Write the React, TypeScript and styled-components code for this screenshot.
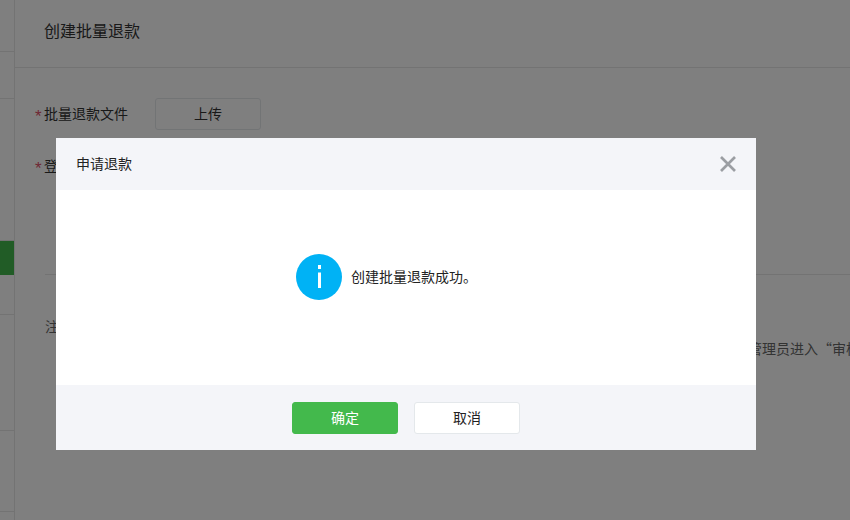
import React from "react";
import styled, { createGlobalStyle } from "styled-components";

const GlobalStyle = createGlobalStyle`
  html, body {
    margin: 0;
    padding: 0;
    background: #fff;
  }
  body {
    font-family: "Noto Sans CJK SC", "Liberation Sans", sans-serif;
    font-size: 14px;
    color: #333;
  }
`;

const Page = styled.div`
  position: relative;
  display: flex;
  width: 850px;
  height: 520px;
  overflow: hidden;
`;

const Sidebar = styled.div`
  flex: none;
  width: 14px;
  border-right: 1px solid #e7e7e7;
`;

const SideRow = styled.div<{ $h: number; $active?: boolean }>`
  box-sizing: border-box;
  height: ${({ $h }) => $h}px;
  border-bottom: ${({ $active }) => ($active ? "none" : "1px solid #e7e7e7")};
  background: ${({ $active }) => ($active ? "#43b94c" : "transparent")};
`;

const Main = styled.div`
  flex: 1;
  min-width: 0;
`;

const Header = styled.div`
  box-sizing: border-box;
  display: flex;
  align-items: center;
  height: 68px;
  padding: 0 0 8px 29px;
  border-bottom: 1px solid #e7e7e7;
  font-size: 16px;
`;

const Form = styled.div`
  padding: 30px 0 0 20px;
`;

const FormRow = styled.div`
  display: flex;
  align-items: center;
  height: 32px;
  margin-bottom: 20px;
`;

const Star = styled.span`
  width: 9px;
  padding-top: 4px;
  font-family: "Liberation Sans", sans-serif;
  font-size: 17px;
  line-height: 1;
  color: #e0506a;
`;

const Label = styled.span`
  width: 111px;
  padding-bottom: 2px;
`;

const UploadButton = styled.div`
  box-sizing: border-box;
  display: flex;
  align-items: center;
  justify-content: center;
  width: 106px;
  height: 32px;
  padding-bottom: 2px;
  border: 1px solid #e4e8eb;
  border-radius: 3px;
`;

const Divider = styled.div`
  height: 1px;
  margin: 92px 0 0 30px;
  background: #e7e7e7;
`;

const Notes = styled.div`
  padding: 40px 0 0 30px;
  white-space: nowrap;
  line-height: 22px;
  color: #666;
  font-feature-settings: "fwid";
`;

const NoteLine = styled.div<{ $indent?: number }>`
  text-indent: ${({ $indent }) => $indent ?? 0}px;
`;

const Overlay = styled.div`
  position: absolute;
  inset: 0;
  padding: 138px 0 0 56px;
  background: rgba(0, 0, 0, 0.5);
`;

const Modal = styled.div`
  display: flex;
  flex-direction: column;
  width: 700px;
  height: 312px;
  background: #fff;
`;

const ModalHeader = styled.div`
  display: flex;
  align-items: center;
  justify-content: space-between;
  box-sizing: border-box;
  height: 52px;
  padding: 0 20px;
  background: #f4f5f9;
  color: #222;
`;

const ModalTitle = styled.span`
  padding-bottom: 2px;
`;

const CloseIcon = styled.svg`
  width: 18px;
  height: 18px;
  margin-right: -1px;
  stroke: #9b9ea3;
  stroke-width: 2.7;
`;

const ModalBody = styled.div`
  flex: 1;
  display: flex;
  align-items: center;
  justify-content: center;
  gap: 9px;
  padding: 0 39px 21px 0;
  color: #222;
`;

const Message = styled.span`
  padding-bottom: 3px;
`;

const InfoIcon = styled.svg`
  width: 46px;
  height: 46px;
`;

const ModalFooter = styled.div`
  display: flex;
  align-items: center;
  justify-content: center;
  gap: 16px;
  height: 65px;
  padding-top: 1px;
  box-sizing: border-box;
  background: #f4f5f9;
`;

const FooterButton = styled.div<{ $primary?: boolean }>`
  box-sizing: border-box;
  display: flex;
  align-items: center;
  justify-content: center;
  width: 106px;
  height: 32px;
  padding-bottom: 2px;
  border-radius: 3px;
  border: 1px solid ${({ $primary }) => ($primary ? "#43b94c" : "#e4e8eb")};
  background: ${({ $primary }) => ($primary ? "#43b94c" : "#fff")};
  color: ${({ $primary }) => ($primary ? "#fff" : "#222")};
`;

const sideRows = [
  { h: 52 },
  { h: 47 },
  { h: 142 },
  { h: 34, active: true },
  { h: 40 },
  { h: 116 },
  { h: 81 },
];

export default function App() {
  return (
    <>
      <GlobalStyle />
      <Page>
        <Sidebar>
          {sideRows.map((r, i) => (
            <SideRow key={i} $h={r.h} $active={r.active} />
          ))}
        </Sidebar>
        <Main>
          <Header>创建批量退款</Header>
          <Form>
            <FormRow>
              <Star>*</Star>
              <Label>批量退款文件</Label>
              <UploadButton>上传</UploadButton>
            </FormRow>
            <FormRow>
              <Star>*</Star>
              <Label>登记</Label>
            </FormRow>
          </Form>
          <Divider />
          <Notes>
            <NoteLine>注：批量退款文件上传后需要审核</NoteLine>
            <NoteLine $indent={17}>
              批量退款文件上传成功后，系统将自动生成批量退款申请单，退款申请不会立即执行，需由商户平台的高级财务管理员进入“审核
            </NoteLine>
          </Notes>
        </Main>
        <Overlay>
          <Modal>
            <ModalHeader>
              <ModalTitle>申请退款</ModalTitle>
              <CloseIcon viewBox="0 0 18 18">
                <path d="M2 2L16 16M16 2L2 16" />
              </CloseIcon>
            </ModalHeader>
            <ModalBody>
              <InfoIcon viewBox="0 0 46 46">
                <circle cx="23" cy="23" r="23" fill="#00b2f5" />
                <rect x="22" y="11" width="3" height="4" fill="#fff" />
                <rect x="22" y="18.5" width="3" height="15.5" fill="#fff" />
              </InfoIcon>
              <Message>创建批量退款成功。</Message>
            </ModalBody>
            <ModalFooter>
              <FooterButton $primary>确定</FooterButton>
              <FooterButton>取消</FooterButton>
            </ModalFooter>
          </Modal>
        </Overlay>
      </Page>
    </>
  );
}
